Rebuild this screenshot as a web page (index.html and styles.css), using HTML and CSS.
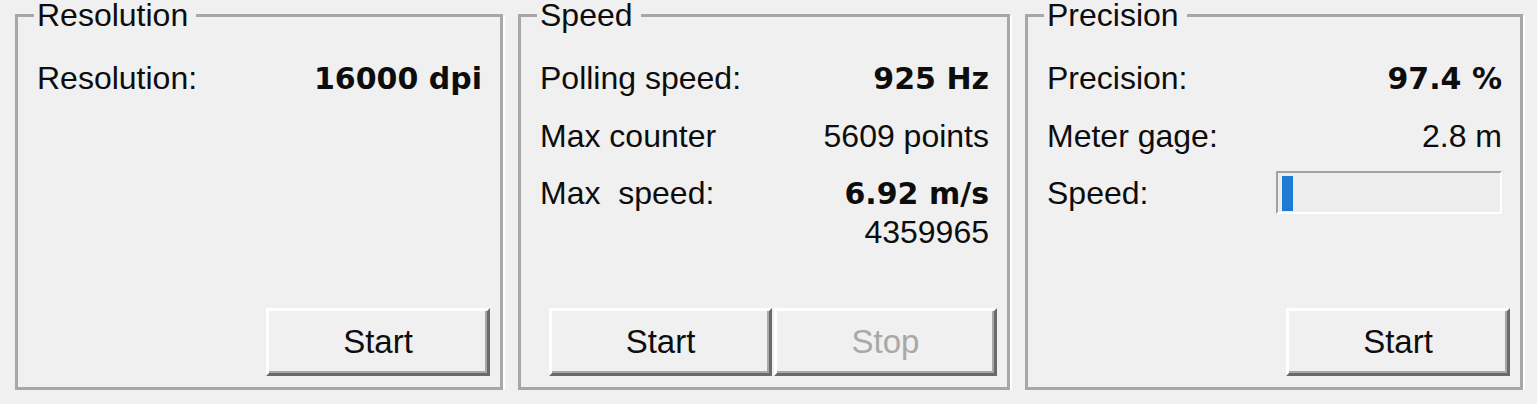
FILE: index.html
```html
<!DOCTYPE html>
<html>
	<head>
		<meta charset="utf-8" />
		<title>Mouse test</title>
		<link rel="stylesheet" href="styles.css">
	</head>
	<body>
		<div class="panel">
			<fieldset class="group group-res">
				<legend>Resolution</legend>
				<div class="group-body">
					<div class="row">
						<span class="label">Resolution:</span>
						<span class="value bold">16000 dpi</span>
					</div>
					<div class="actions">
						<button class="btn">Start</button>
					</div>
				</div>
			</fieldset>

			<fieldset class="group group-speed">
				<legend>Speed</legend>
				<div class="group-body">
					<div class="row">
						<span class="label">Polling speed:</span>
						<span class="value bold">925 Hz</span>
					</div>
					<div class="row">
						<span class="label">Max counter</span>
						<span class="value">5609 points</span>
					</div>
					<div class="row">
						<span class="label">Max&nbsp; speed:</span>
						<div class="value">
							<div class="bold">6.92 m/s</div>
							<div>4359965</div>
						</div>
					</div>
					<div class="actions">
						<button class="btn btn-half">Start</button>
						<button class="btn btn-half" disabled>Stop</button>
					</div>
				</div>
			</fieldset>

			<fieldset class="group group-prec">
				<legend>Precision</legend>
				<div class="group-body">
					<div class="row">
						<span class="label">Precision:</span>
						<span class="value bold">97.4 %</span>
					</div>
					<div class="row">
						<span class="label">Meter gage:</span>
						<span class="value">2.8 m</span>
					</div>
					<div class="row row-center">
						<span class="label">Speed:</span>
						<div class="meter">
							<div class="meter-fill" style="width: 5%;"></div>
						</div>
					</div>
					<div class="actions">
						<button class="btn">Start</button>
					</div>
				</div>
			</fieldset>
		</div>
	</body>
</html>
```

FILE: styles.css
```css
*{margin: 0;padding: 0;box-sizing: border-box;}
body{
	background: #f0f0f0;
	font-family: "Liberation Sans", Arial, sans-serif;
	font-size: 32px;
	color: #0d0d0d;
}
.panel{
	display: flex;
	gap: 15px;
	padding: 0 14px 0 15px;
}

/* group boxes */
.group{
	border: 3px solid #a7a7a7;
	padding: 0 18px 11px 16px;
	box-shadow: 2px 2px 0 #fff;
}
.group-res{width: 488px;}
.group-speed{width: 492px;}
.group-prec{width: 498px;}
.group legend{
	font-size: 32px;
	line-height: 31px;
	padding: 0 8px 0 3px;
}
.group-body{
	display: flex;
	flex-direction: column;
	height: 345px;
	padding-top: 28px;
}

/* label / value rows */
.row{
	display: flex;
	justify-content: space-between;
	align-items: baseline;
	line-height: 38px;
	margin-bottom: 19px;
	padding-left: 3px;
}
.row-center{align-items: center;}
.value{text-align: right;}
.bold{
	font-family: "DejaVu Sans", sans-serif;
	font-weight: bold;
	font-size: 30px;
}

/* progress */
.meter{
	width: 226px;
	height: 43px;
	margin: -3px 0 -2px;
	padding: 3px 0 1px 4px;
	border: 2px solid;
	border-color: #a2a2a2 #fff #fff #a2a2a2;
	background: #ededed;
}
.meter-fill{
	height: 100%;
	background: #1c7bd4;
}

/* buttons */
.actions{
	margin-top: auto;
	margin-right: -8px;
	display: flex;
	justify-content: flex-end;
	gap: 2px;
}
.btn{
	width: 224px;
	height: 68px;
	font-family: inherit;
	font-size: 33px;
	color: #0d0d0d;
	background: #f0f0f0;
	border: 3px solid;
	border-color: #fff #6a6a6a #6a6a6a #fff;
	box-shadow: inset -2px -2px 0 #a8a8a8;
}
.btn-half{width: 223px;}
.btn:disabled{
	color: #a8a8a8;
}
```
